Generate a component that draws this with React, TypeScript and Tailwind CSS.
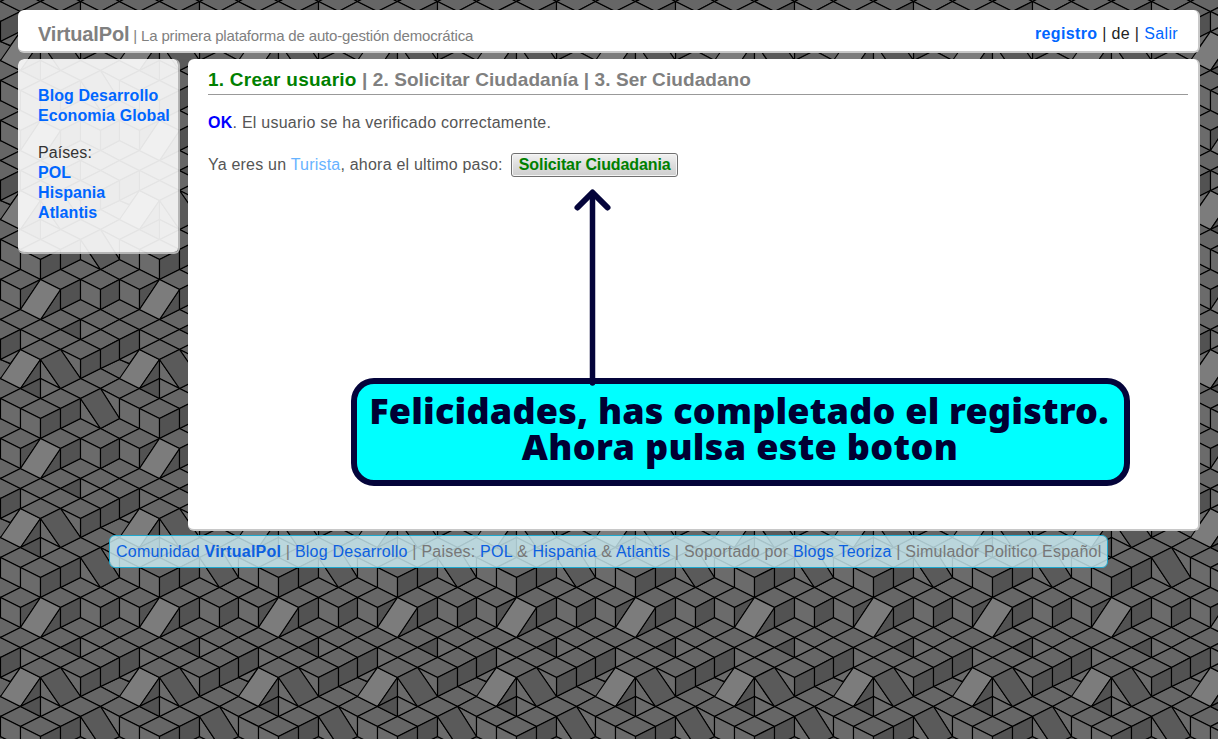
import React from "react";

type Pt = [number, number];

const TOP = "#666666";
const LEFT = "#6b6b6b";
const RIGHT = "#525252";
const SLOPE_LIGHT = "#7c7c7c";
const SLOPE_DARK = "#5a5a5a";

const TILE_W = 119;
const TILE_H = 159;

// Centres of the horizontal cube tops on the isometric lattice.
const tops: Pt[] = [
  [1, 0], [3, 0], [5, 0], [4, 3], [6, 3], [1, 4], [3, 4], [5, 4], [2, 5], [6, 5],
  [3, 6], [5, 6], [2, 7], [4, 7], [6, 9], [5, 10], [4, 11], [6, 11], [1, 12],
  [3, 12], [2, 13], [4, 15], [6, 15],
];

const faces: [string, Pt[]][] = [
  ...tops.map(([c, r]): [string, Pt[]] => [TOP, [[c - 1, r], [c, r - 1], [c + 1, r], [c, r + 1]]]),
  [LEFT, [[0, 0], [1, 1], [1, 3], [0, 2]]],
  [RIGHT, [[1, 1], [2, 0], [1, 3]]],
  [RIGHT, [[3, 1], [3, 3], [2, 4]]],
  [RIGHT, [[3, 1], [4, 0], [4, 2], [3, 3]]],
  [LEFT, [[4, 0], [5, 1], [5, 3], [4, 2]]],
  [RIGHT, [[5, 1], [6, 0], [6, 2], [5, 3]]],
  [RIGHT, [[3, 5], [4, 4], [4, 6]]],
  [LEFT, [[4, 4], [5, 5], [4, 6]]],
  [LEFT, [[1, 5], [2, 6], [1, 7]]],
  [RIGHT, [[4, 8], [5, 7], [5, 9], [4, 10]]],
  [RIGHT, [[5, 7], [6, 6], [6, 8], [5, 9]]],
  [RIGHT, [[6, 6], [7, 5], [7, 7], [6, 8]]],
  [LEFT, [[6, 8], [7, 7], [6.5, 8.5]]],
  [RIGHT, [[2, 8], [2, 10], [1, 11]]],
  [RIGHT, [[1, 11], [2, 10], [2, 12]]],
  [LEFT, [[2, 8], [3, 11], [2, 10]]],
  [LEFT, [[2, 10], [3, 11], [2, 12]]],
  [LEFT, [[3, 7], [4, 8], [4, 10]]],
  [LEFT, [[0, 12], [1, 13], [1, 15], [0, 14]]],
  [LEFT, [[1, 13], [2, 14], [2, 16], [1, 15]]],
  [RIGHT, [[2, 14], [3, 13], [3, 15], [2, 16]]],
  [RIGHT, [[3, 13], [4, 12], [4, 14], [3, 15]]],
  [LEFT, [[4, 12], [5, 15], [4, 14]]],
  [LEFT, [[5, 11], [6, 12], [6, 14]]],
  [SLOPE_DARK, [[2, 8], [3, 7], [4, 10], [3, 11]]],
  [SLOPE_DARK, [[4, 12], [5, 11], [6, 14], [5, 15]]],
  [SLOPE_LIGHT, [[2, 0], [3, 1], [2, 4], [1, 3]]],
  [SLOPE_LIGHT, [[7, 7], [8, 8], [7, 11], [6, 10]]],
];

// Vertices sit on pixel centres so that the upright edges stay one pixel wide.
const px = (c: number) => Math.ceil((c * TILE_W) / 6) + 0.5;
const py = (r: number) => Math.round((r * TILE_H) / 16) + 0.5;
const toPoints = (pts: Pt[], dx: number, dy: number) =>
  pts.map(([c, r]) => `${px(c) + dx},${py(r) + dy}`).join(" ");

const columns = Array.from({ length: 12 }, (_, i) => (i - 1) * TILE_W);
const rows = Array.from({ length: 6 }, (_, i) => (i - 1) * TILE_H - 39);

function CubesBackground() {
  return (
    <svg
      className="absolute inset-0 -z-10 bg-[#666666]"
      width="1218"
      height="739"
      stroke="#000"
      strokeWidth="1.15"
      strokeLinejoin="round"
      aria-hidden="true"
    >
      {rows.map((dy) =>
        columns.map((dx) => (
          <g key={`${dx}:${dy}`}>
            {faces.map(([fill, pts], i) => (
              <polygon key={i} fill={fill} points={toPoints(pts, dx, dy)} />
            ))}
          </g>
        )),
      )}
    </svg>
  );
}

function A({ children, bold = false }: { children: React.ReactNode; bold?: boolean }) {
  return (
    <a href="#" className={bold ? "font-bold text-[#0066ff]" : "text-[#0066ff]"}>
      {children}
    </a>
  );
}

function Header() {
  return (
    <header className="flex h-[43px] items-start justify-between rounded-[6px] border-r-2 border-b-2 border-[#c8c8c8] bg-white pr-5 pl-5">
      <div className="pt-[10px] text-[15px] leading-[28px] tracking-[-0.165px] whitespace-nowrap text-[#808080]">
        <span className="text-[20px] font-bold">VirtualPol</span> | La primera plataforma de auto-gestión democrática
      </div>
      <div className="pt-[14px] leading-5 tracking-[0.36px] whitespace-nowrap text-[#222]">
        <A bold>registro</A> | de | <A>Salir</A>
      </div>
    </header>
  );
}

function Sidebar() {
  return (
    <nav className="flex h-[195px] w-[162px] shrink-0 flex-col rounded-[6px] border-r-2 border-b-2 border-[#c0c0c0]/90 bg-[#fdfdfd]/90 bg-clip-padding pt-[27px] pl-5 leading-5 tracking-[0.08px] whitespace-nowrap text-[#333]">
      <A bold>Blog Desarrollo</A>
      <A bold>Economia Global</A>
      <span className="mt-[17px]">Países:</span>
      <A bold>POL</A>
      <A bold>Hispania</A>
      <A bold>Atlantis</A>
    </nav>
  );
}

function Callout() {
  return (
    <div className="absolute top-[129px] left-[163px] w-[779px]">
      <svg className="absolute top-0 left-[220px] z-10" width="44" height="200" fill="none" stroke="#04043a" strokeLinecap="round" strokeLinejoin="round">
        <path d="M21.500 5V195" strokeWidth="5.500" />
        <path d="M6.500 19.500L21.500 4.500L36.500 19.500" strokeWidth="6" />
      </svg>
      <div className="mt-[190px] h-[108px] rounded-[23px] border-[6px] border-[#04043a] bg-[#00ffff] pt-[9px] pr-[3px] text-center font-['Noto_Sans','Open_Sans',sans-serif] text-[36px] leading-[36px] font-black whitespace-nowrap text-[#000033]">
        <div className="tracking-[0.2px]">Felicidades, has completado el registro.</div>
        <div className="pl-[2px] tracking-[0.33px]">Ahora pulsa este boton</div>
      </div>
    </div>
  );
}

function Content() {
  return (
    <main className="relative h-[472px] grow rounded-[6px] border-r-2 border-b-2 border-[#c8c8c8] bg-white pt-[9px] pr-[10px] pl-5 text-[#555]">
      <h1 className="h-[27px] border-b border-[#999] text-[19px] leading-[24px] font-bold tracking-[0.08px] whitespace-nowrap text-[#808080]">
        <span className="tracking-[0.25px] text-[#008000]">1. Crear usuario</span> | 2. Solicitar Ciudadanía | 3. Ser Ciudadano
      </h1>
      <p className="mt-[18px] leading-5 tracking-[0.25px]">
        <b className="text-[#0000ff]">OK</b>. El usuario se ha verificado correctamente.
      </p>
      <p className="mt-[20px] flex items-center leading-5">
        <span className="tracking-[0.21px] whitespace-pre">
          Ya eres un <span className="text-[#66b3ff]">Turista</span>, ahora el ultimo paso:
        </span>
        <button className="ml-2 h-6 w-[167px] rounded-[3px] border border-[#707070] bg-linear-to-b from-[#f2f2f2] from-0% via-[#dddddd] via-50% to-[#cfcfcf] font-bold tracking-[-0.1px] whitespace-nowrap text-[#008000] inset-ring inset-ring-[#f6f6f6]">
          <span className="block pl-px leading-5">Solicitar Ciudadania</span>
        </button>
      </p>
      <Callout />
    </main>
  );
}

function Footer() {
  return (
    <footer className="mt-1 ml-[91px] h-[33px] w-[999px] rounded-[6px] border border-[#1fa9cf] bg-[#cff3fa]/80 pl-[6px] leading-[31px] tracking-[0.225px] whitespace-nowrap text-[#777]">
      <span className="[&_a]:text-[#0c5fe0]">
        <A>Comunidad <b>VirtualPol</b></A> | <A>Blog Desarrollo</A> | Paises: <A>POL</A> &amp; <A>Hispania</A> &amp; <A>Atlantis</A> | Soportado por{" "}
        <A>Blogs Teoriza</A> | Simulador Politico Español
      </span>
    </footer>
  );
}

export default function App() {
  return (
    <div className="relative isolate h-[739px] w-[1218px] overflow-hidden px-[18px] pt-[10px] font-['Liberation_Sans',Arial,sans-serif] text-[16px]">
      <CubesBackground />
      <Header />
      <div className="mt-[6px] flex items-start gap-2">
        <Sidebar />
        <Content />
      </div>
      <Footer />
    </div>
  );
}
